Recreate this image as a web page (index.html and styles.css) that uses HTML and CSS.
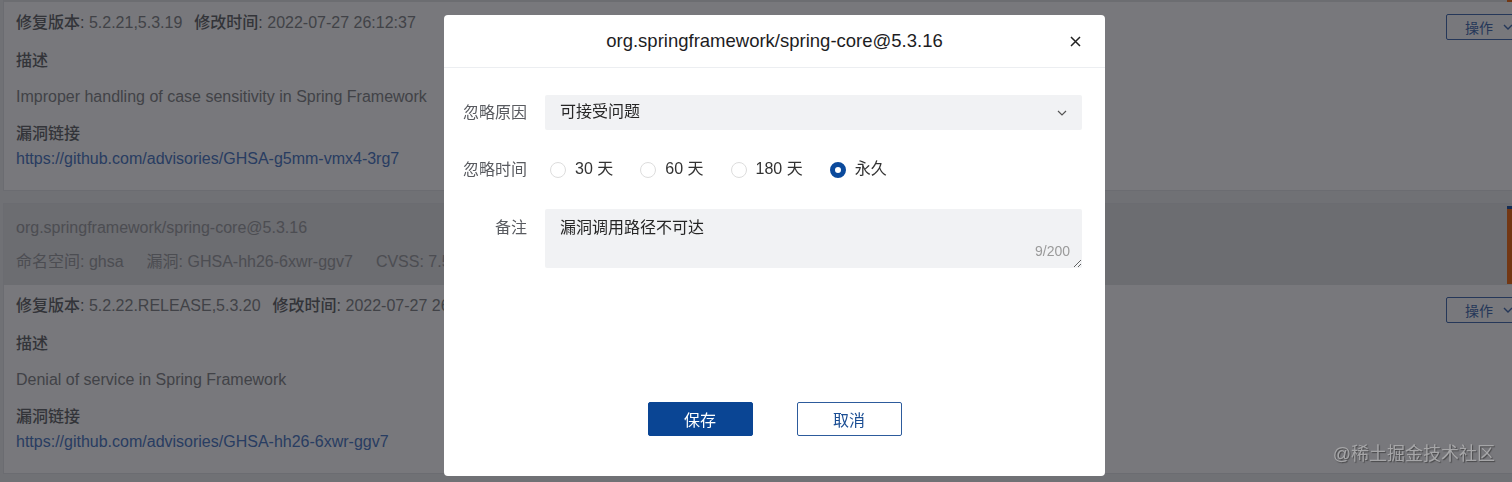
FILE: index.html
```html
<!DOCTYPE html>
<html lang="zh-CN">
<head>
<meta charset="utf-8">
<title>忽略漏洞</title>
<link rel="stylesheet" href="styles.css">
</head>
<body>
<div class="page">
  <div class="card card-first">
    <div class="card-head head-strip">
      <div class="sev"></div>
    </div>
    <div class="card-body">
      <div class="info">
        <div class="line"><span class="k">修复版本: </span><span class="v">5.2.21,5.3.19</span><span class="k">修改时间: </span><span class="v">2022-07-27 26:12:37</span></div>
        <div class="sec-title">描述</div>
        <div class="desc">Improper handling of case sensitivity in Spring Framework</div>
        <div class="sec-title tight">漏洞链接</div>
        <a class="link" href="#">https://github.com/advisories/GHSA-g5mm-vmx4-3rg7</a>
      </div>
      <button class="ops">操作<svg class="ops-arrow" width="10" height="6" viewBox="0 0 10 6"><path d="M1 1l4 4 4-4" fill="none" stroke="currentColor" stroke-width="1.4"/></svg></button>
    </div>
  </div>

  <div class="card">
    <div class="card-head">
      <div class="head-text">
        <div class="pkg">org.springframework/spring-core@5.3.16</div>
        <div class="meta"><span>命名空间: ghsa</span><span>漏洞: GHSA-hh26-6xwr-ggv7</span><span>CVSS: 7.5</span><span>严重程度: 高危</span></div>
      </div>
      <div class="sev"></div>
    </div>
    <div class="card-body">
      <div class="info">
        <div class="line"><span class="k">修复版本: </span><span class="v">5.2.22.RELEASE,5.3.20</span><span class="k">修改时间: </span><span class="v">2022-07-27 26:12:37</span></div>
        <div class="sec-title">描述</div>
        <div class="desc">Denial of service in Spring Framework</div>
        <div class="sec-title tight">漏洞链接</div>
        <a class="link" href="#">https://github.com/advisories/GHSA-hh26-6xwr-ggv7</a>
      </div>
      <button class="ops">操作<svg class="ops-arrow" width="10" height="6" viewBox="0 0 10 6"><path d="M1 1l4 4 4-4" fill="none" stroke="currentColor" stroke-width="1.4"/></svg></button>
    </div>
  </div>
</div>

<div class="mask"></div>

<div class="modal">
  <div class="modal-head">
    <span></span>
    <div class="modal-title">org.springframework/spring-core@5.3.16</div>
    <button class="close" aria-label="关闭"><svg width="11" height="11" viewBox="0 0 11 11"><path d="M1 1l9 9M10 1l-9 9" stroke="#222" stroke-width="1.5" fill="none"/></svg></button>
  </div>
  <div class="form">
    <div class="label">忽略原因</div>
    <div class="select"><span class="select-text">可接受问题</span><svg width="10" height="6" viewBox="0 0 10 6"><path d="M1 1l4 4 4-4" fill="none" stroke="#555" stroke-width="1.2"/></svg></div>

    <div class="label">忽略时间</div>
    <div class="radios">
      <label class="radio"><span class="dot"></span><span class="radio-text">30 天</span></label>
      <label class="radio"><span class="dot"></span><span class="radio-text">60 天</span></label>
      <label class="radio"><span class="dot"></span><span class="radio-text">180 天</span></label>
      <label class="radio"><span class="dot on"></span><span class="radio-text">永久</span></label>
    </div>

    <div class="label label-top">备注</div>
    <div class="ta-wrap">
      <textarea class="ta">漏洞调用路径不可达</textarea>
      <span class="count">9/200</span>
    </div>
  </div>
  <div class="footer">
    <button class="btn btn-primary">保存</button>
    <button class="btn btn-default">取消</button>
  </div>
</div>

<div class="watermark">@稀土掘金技术社区</div>
</body>
</html>
```

FILE: styles.css
```css
html, body {
  margin: 0;
  height: 482px;
  overflow: hidden;
}
body {
  background: #eaecf1;
  font-family: "Liberation Sans", "Noto Sans CJK SC", sans-serif;
  font-size: 16px;
  color: #333;
}
button {
  font-family: inherit;
  cursor: pointer;
}

/* background page */
.page {
  width: 1535px;
  padding-left: 3px;
  display: flex;
  flex-direction: column;
  gap: 12px;
}
.card {
  background: #fafbfe;
  border: 1px solid #e0e2e8;
}
.card-first {
  border-top: 0;
}
.card-head {
  display: flex;
  background: #e1e3e8;
}
.head-strip {
  height: 2px;
}
.head-text {
  padding: 12px 12px 11px;
  display: flex;
  flex-direction: column;
  gap: 10px;
  line-height: 24px;
  color: #9fa1a7;
}
.meta {
  display: flex;
  gap: 23px;
}
.sev {
  width: 30px;
  margin: 2px 0 1px auto;
  background: #f07324;
  border-top: 3px solid #2a5aa8;
}
.head-strip .sev {
  margin: 0 0 0 auto;
  border-top: 0;
}
.card-body {
  display: flex;
  justify-content: space-between;
  align-items: flex-start;
  padding: 9px 12px 19px;
}
.info {
  display: flex;
  flex-direction: column;
  line-height: 24px;
}
.line {
  margin-bottom: 14px;
}
.k {
  color: #6c6e74;
  font-weight: 500;
}
.v {
  color: #898b91;
  margin-right: 12px;
}
.sec-title {
  color: #6c6e74;
  font-weight: 500;
  margin-bottom: 12px;
}
.sec-title.tight {
  margin-bottom: 1px;
}
.desc {
  color: #898b91;
  margin-bottom: 13px;
}
.link {
  color: #5580c8;
  text-decoration: none;
}
.ops {
  margin-top: 3px;
  width: 79px;
  height: 26px;
  padding: 0 0 0 18px;
  display: flex;
  align-items: center;
  gap: 10px;
  border: 1px solid #4e73b6;
  border-radius: 2px;
  background: transparent;
  color: #4e73b6;
  font-size: 14px;
}

/* mask */
.mask {
  position: fixed;
  inset: 0;
  background: rgba(0, 0, 4, 0.52);
}

/* modal */
.modal {
  position: fixed;
  left: 444px;
  top: 15px;
  width: 661px;
  height: 461px;
  background: #fff;
  border-radius: 4px;
  display: flex;
  flex-direction: column;
}
.modal-head {
  height: 52px;
  border-bottom: 1px solid #eceef1;
  display: grid;
  grid-template-columns: 1fr auto 1fr;
  align-items: center;
}
.modal-title {
  font-size: 18.5px;
  color: #1d1d1f;
}
.close {
  justify-self: end;
  margin-right: 24px;
  width: 11px;
  height: 11px;
  padding: 0;
  border: 0;
  background: none;
  display: flex;
}
.form {
  padding: 27px 23px 0 0;
  display: grid;
  grid-template-columns: 83px 1fr;
  column-gap: 18px;
  row-gap: 22px;
}
.label {
  text-align: right;
  color: #595b60;
  line-height: 35px;
}
.label-top {
  line-height: 24px;
  padding-top: 7px;
}
.select {
  height: 35px;
  background: #f1f2f4;
  border-radius: 2px;
  padding: 0 15px;
  display: flex;
  align-items: center;
  justify-content: space-between;
  color: #262626;
}
.select-text {
  line-height: 24px;
  margin-top: -1px;
}
.radios {
  height: 35px;
  padding-left: 5px;
  display: flex;
  align-items: center;
}
.radio {
  display: flex;
  align-items: center;
  gap: 9px;
  margin-right: 27px;
  color: #333;
}
.radio-text {
  line-height: 24px;
  margin-top: -1px;
}
.dot {
  width: 16px;
  height: 16px;
  box-sizing: border-box;
  border: 1px solid #dcdcdc;
  border-radius: 50%;
  background: #fff;
}
.dot.on {
  border: 5px solid #0b4a9c;
}
.ta-wrap {
  position: relative;
  display: flex;
}
.ta {
  width: 100%;
  height: 59px;
  box-sizing: border-box;
  border: 0;
  border-radius: 2px;
  background: #f1f2f4;
  padding: 7px 15px;
  font-family: inherit;
  font-size: 16px;
  line-height: 24px;
  color: #262626;
  resize: vertical;
  outline: none;
}
.count {
  position: absolute;
  right: 12px;
  bottom: 9px;
  font-size: 14px;
  line-height: 16px;
  color: #9a9a9a;
}
.footer {
  margin-top: auto;
  padding-bottom: 40px;
  display: flex;
  justify-content: center;
  gap: 44px;
}
.btn {
  width: 105px;
  height: 34px;
  border-radius: 2px;
  font-size: 16px;
}
.btn-primary {
  background: #0a4594;
  border: 1px solid #0a4594;
  color: #fff;
}
.btn-default {
  background: #fff;
  border: 1px solid #2d5b9c;
  color: #1a4d93;
}

.watermark {
  position: fixed;
  right: 17px;
  bottom: 16px;
  font-size: 18px;
  line-height: 24px;
  color: #a6a6a8;
  text-shadow: 1px 1px 1px rgba(40, 40, 40, 0.6);
}
```
